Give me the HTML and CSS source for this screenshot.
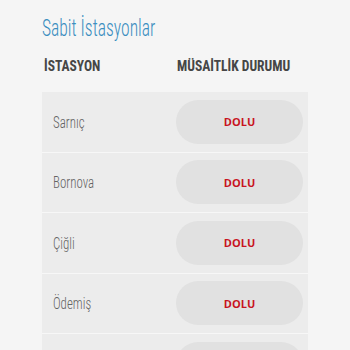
FILE: index.html
```html
<!DOCTYPE html>
<html lang="tr">
<head>
    <meta charset="UTF-8">
    <meta name="viewport" content="width=device-width, initial-scale=1.0">
    <title>Sabit İstasyonlar</title>
    <link rel="stylesheet" href="styles.css">
</head>
<body>

<div class="page">
    <h1 class="title"><span class="narrow">Sabit İstasyonlar</span></h1>

    <div class="table-head">
        <div class="col-name"><span class="narrow-head">İSTASYON</span></div>
        <div class="col-status"><span class="narrow-head">MÜSAİTLİK DURUMU</span></div>
    </div>

    <div class="station-list">
        <div class="station-row">
            <div class="col-name"><span class="narrow">Sarnıç</span></div>
            <div class="col-status"><span class="status-pill">DOLU</span></div>
        </div>
        <div class="station-row">
            <div class="col-name"><span class="narrow">Bornova</span></div>
            <div class="col-status"><span class="status-pill">DOLU</span></div>
        </div>
        <div class="station-row">
            <div class="col-name"><span class="narrow">Çiğli</span></div>
            <div class="col-status"><span class="status-pill">DOLU</span></div>
        </div>
        <div class="station-row">
            <div class="col-name"><span class="narrow">Ödemiş</span></div>
            <div class="col-status"><span class="status-pill">DOLU</span></div>
        </div>
        <!-- next row is only partly on screen -->
        <div class="station-row">
            <div class="col-name"></div>
            <div class="col-status"><span class="status-pill"></span></div>
        </div>
    </div>
</div>

</body>
</html>
```

FILE: styles.css
```css
* {
    box-sizing: border-box;
}

body {
    margin: 0;
    padding: 0;
    background-color: #f5f5f5;
    font-family: Roboto, "Liberation Sans", sans-serif;
    font-stretch: 75%;
    height: 350px;
    overflow: hidden;
}

.page {
    padding: 14px 42px 0 42px;
}

/* the app font is much narrower than anything installed */
.narrow {
    display: inline-block;
    white-space: nowrap;
    transform: scaleX(0.76);
    transform-origin: left center;
}

.narrow-head {
    display: inline-block;
    white-space: nowrap;
    transform: scaleX(0.9);
    transform-origin: left center;
}

.title {
    margin: 0;
    font-size: 24px;
    font-weight: 300;
    color: #3b8ec0;
    line-height: 28px;
}

.title .narrow {
    transform: scaleX(0.73);
}

.table-head {
    display: flex;
    padding: 15px 5px 0 2px;
    height: 50px;
    font-size: 15px;
    font-weight: bold;
    color: #464646;
    white-space: nowrap;
}

.col-name {
    width: 134px;
}

.col-status {
    flex: 1;
}

.station-list {
    width: 266px;
}

.station-row {
    display: flex;
    align-items: center;
    height: 60.5px;
    padding: 8px 5px 8px 11px;
    background-color: #ececec;
    border-bottom: 1.5px solid #f7f7f7;
    font-size: 17px;
    font-weight: 300;
    color: #646464;
}

.station-row .col-name {
    width: 123px;
}

.status-pill {
    display: flex;
    justify-content: center;
    align-items: center;
    height: 44px;
    border-radius: 22px;
    background-color: #e1e1e1;
    font-family: "Open Sans", Arial, sans-serif;
    font-stretch: normal;
    font-size: 11px;
    font-weight: bold;
    color: #c8141f;
}
```
